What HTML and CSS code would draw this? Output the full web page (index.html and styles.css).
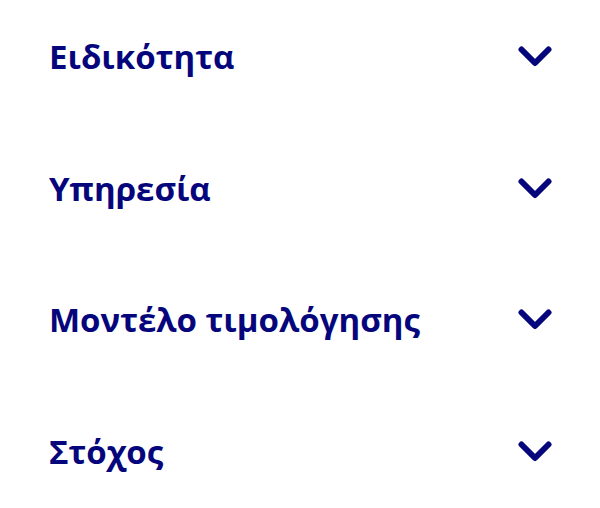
FILE: index.html
```html
<!DOCTYPE html>
<html lang="el">
<head>
<meta charset="utf-8">
<link rel="stylesheet" href="styles.css">
</head>
<body>
<ul class="filters">
  <li class="row"><span class="label">Ειδικότητα</span><svg class="chev" viewBox="0 0 34 22" width="34" height="22"><polyline points="3.5,3.5 17,17 30.5,3.5"/></svg></li>
  <li class="row"><span class="label">Υπηρεσία</span><svg class="chev" viewBox="0 0 34 22" width="34" height="22"><polyline points="3.5,3.5 17,17 30.5,3.5"/></svg></li>
  <li class="row"><span class="label">Μοντέλο τιμολόγησης</span><svg class="chev" viewBox="0 0 34 22" width="34" height="22"><polyline points="3.5,3.5 17,17 30.5,3.5"/></svg></li>
  <li class="row"><span class="label">Στόχος</span><svg class="chev" viewBox="0 0 34 22" width="34" height="22"><polyline points="3.5,3.5 17,17 30.5,3.5"/></svg></li>
</ul>
</body>
</html>
```
FILE: styles.css
```css
html, body {
  margin: 0;
  padding: 0;
  background: #ffffff;
}
.filters {
  list-style: none;
  margin: 0;
  padding: 37px 48px 0 49px;
  display: flex;
  flex-direction: column;
  gap: 91.5px;
}
.row {
  height: 40px;
  display: flex;
  align-items: center;
  justify-content: space-between;
}
.label {
  font-family: "Open Sans", "Noto Sans", sans-serif;
  font-weight: 700;
  font-size: 33px;
  line-height: 40px;
  color: #06067c;
}
.chev {
  display: block;
  fill: none;
  stroke: #06067c;
  stroke-width: 6;
  stroke-linecap: round;
  stroke-linejoin: round;
}
```
